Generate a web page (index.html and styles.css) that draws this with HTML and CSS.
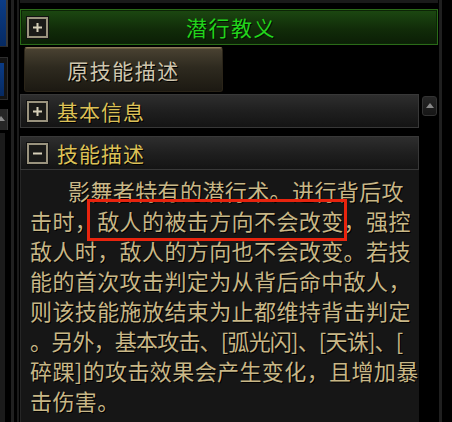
FILE: index.html
```html
<!doctype html>
<html lang="zh-CN">
  <head>
    <meta charset="UTF-8" />
    <meta name="viewport" content="width=device-width, initial-scale=1.0" />
    <title>潜行教义</title>
    <link rel="stylesheet" href="styles.css">
  </head>
  <body>
    <div class="page">
      <aside class="side">
        <div class="side-btns">
          <div class="side-blue"></div>
          <div class="side-slot"><div class="side-blue small"></div></div>
          <div class="side-arrow"></div>
          <div class="side-track"></div>
        </div>
      </aside>

      <div class="panel">
        <div class="title-bar">
          <span class="toggle">
            <svg width="9" height="9" viewBox="0 0 9 9"><path d="M0 4.5h9M4.5 0v9" stroke="#d6cfb8" stroke-width="2"/></svg>
          </span>
          <span class="title">潜行教义</span>
        </div>

        <div class="panel-body">
          <div class="col">
            <button class="orig-button">原技能描述</button>

            <div class="section">
              <span class="toggle">
                <svg width="9" height="9" viewBox="0 0 9 9"><path d="M0 4.5h9M4.5 0v9" stroke="#d6cfb8" stroke-width="2"/></svg>
              </span>
              <span class="section-name">基本信息</span>
            </div>

            <div class="section">
              <span class="toggle">
                <svg width="9" height="9" viewBox="0 0 9 9"><path d="M0 4.5h9" stroke="#d6cfb8" stroke-width="2"/></svg>
              </span>
              <span class="section-name">技能描述</span>
            </div>

            <div class="desc">
              <p class="desc-text">影舞者特有的潜行术。进行背后攻<br>击时，<span class="mark">敌人的被击方向不会改变</span>，强控<br>敌人时，敌人的方向也不会改变。若技<br>能的首次攻击判定为从背后命中敌人，<br>则该技能施放结束为止都维持背击判定<br><span class="tight">。另外，基本攻击、[弧光闪]、[天诛]、[</span><br>碎踝]的攻击效果会产生变化，且增加暴<br>击伤害。</p>
            </div>
          </div>

          <div class="scroll">
            <div class="scroll-up"></div>
          </div>
        </div>
      </div>

      <div class="rail"></div>
    </div>
  </body>
</html>
```

FILE: styles.css
```css
* {
  margin: 0;
  padding: 0;
  box-sizing: border-box;
}

body {
  background: #000;
  font-family: "Noto Sans CJK SC", "Noto Sans", sans-serif;
  width: 452px;
  height: 422px;
  overflow: hidden;
}

.page {
  display: flex;
  height: 422px;
}

/* left strip, cut off by the screenshot */
.side {
  width: 20px;
  flex-shrink: 0;
  display: flex;
  background: linear-gradient(
    to right,
    transparent 0 8px,
    #000 8px 11px,
    #202020 11px 14px,
    #000 14px 17px,
    #1c1c1c 17px 19px,
    #000 19px
  );
}

.side-btns {
  width: 8px;
  display: flex;
  flex-direction: column;
}

.side-blue {
  height: 47px;
  background: linear-gradient(#0b3c86, #062a62);
  border-right: 2px solid #383838;
  border-bottom: 1px solid #2a2a2a;
}

.side-slot {
  margin-top: 10px;
  height: 43px;
  padding: 5px 3px 3px 0;
  border: 1px solid #2e2e2e;
  border-left: none;
  background: #141414;
}

.side-blue.small {
  height: 100%;
  border: none;
}

.side-arrow {
  margin-top: 9px;
  height: 21px;
  background: #262626;
  border-right: 1px solid #3a3a3a;
  position: relative;
}

.side-arrow::after {
  content: "";
  position: absolute;
  left: 0;
  top: 7px;
  border-left: 4px solid transparent;
  border-right: 4px solid transparent;
  border-bottom: 5px solid #8a8a8a;
  margin-left: -3px;
}

.side-track {
  margin-top: 3px;
  flex: 1;
  width: 5px;
  background: #1b1b1b;
}

.panel {
  width: 418px;
  flex-shrink: 0;
  padding-top: 9px;
  display: flex;
  flex-direction: column;
  border-top: 3px solid #1a1a1a;
}

.title-bar {
  height: 36px;
  margin-top: -3px;
  display: flex;
  align-items: center;
  padding-left: 6px;
  border: 1px solid #2a6a18;
  box-shadow: inset 0 0 0 1px #0c2406;
  background: linear-gradient(#1c4811, #112c09 55%, #0b1e06);
  position: relative;
}

.toggle {
  width: 21px;
  height: 21px;
  display: flex;
  align-items: center;
  justify-content: center;
  border: 2px solid #9a937e;
  outline: 1px solid #111;
  background: #1a1a18;
  flex-shrink: 0;
}

.title {
  position: absolute;
  left: 4px;
  right: 0;
  text-align: center;
  font-size: 21px;
  letter-spacing: 1.5px;
  color: #22d41c;
  text-shadow: 1px 1px 0 #041000;
  pointer-events: none;
}

.panel-body {
  flex: 1;
  display: flex;
  min-height: 0;
}

.col {
  width: 399px;
  display: flex;
  flex-direction: column;
}

.orig-button {
  margin: 2px 0 0 4px;
  width: 199px;
  height: 45px;
  font-family: inherit;
  font-size: 21px;
  letter-spacing: 1.5px;
  color: #cfc6ae;
  text-shadow: 1px 1px 0 #000;
  border: 1px solid #2a2418;
  border-top-color: #8c7c58;
  border-radius: 3px;
  background: linear-gradient(#4a4232, #2e2a1f 45%, #1c1912);
  box-shadow: inset 0 1px 0 #6a5d40;
}

.section {
  margin-top: 2px;
  height: 34px;
  display: flex;
  align-items: center;
  padding-left: 6px;
  border: 1px solid #383838;
  background: linear-gradient(#2e2e2e, #1f1f1f 50%, #141414);
}

.section + .section {
  margin-top: 8px;
}

.section-name {
  margin-left: 9px;
  font-size: 21px;
  letter-spacing: 1px;
  color: #dcc157;
  text-shadow: 1px 1px 0 #000;
}

.desc {
  flex: 1;
  background: #161616;
  border-left: 1px solid #262626;
  padding: 5px 0 0 9px;
  overflow: hidden;
}

.desc-text {
  font-size: 22px;
  line-height: 30px;
  letter-spacing: 0.4px;
  color: #c8b787;
  text-shadow: 1px 1px 0 #000;
  text-indent: 38px;
  white-space: nowrap;
}

/* red annotation box */
.mark {
  padding: 2px 0 2px 7px;
  margin-left: -7px;
  outline: 3px solid #e8240e;
}

.tight {
  letter-spacing: -0.8px;
}

.scroll {
  width: 19px;
  padding: 51px 1px 0 3px;
}

.scroll-up {
  height: 20px;
  border: 1px solid #333;
  border-radius: 3px;
  background: linear-gradient(#262626, #161616);
  position: relative;
}

.scroll-up::after {
  content: "";
  position: absolute;
  left: 3px;
  top: 6px;
  border-left: 4px solid transparent;
  border-right: 4px solid transparent;
  border-bottom: 5px solid #888;
}

.rail {
  flex: 1;
  background: linear-gradient(
    to right,
    #000 0 1px,
    #1f1f1f 1px 4px,
    #000 4px
  );
}
```
